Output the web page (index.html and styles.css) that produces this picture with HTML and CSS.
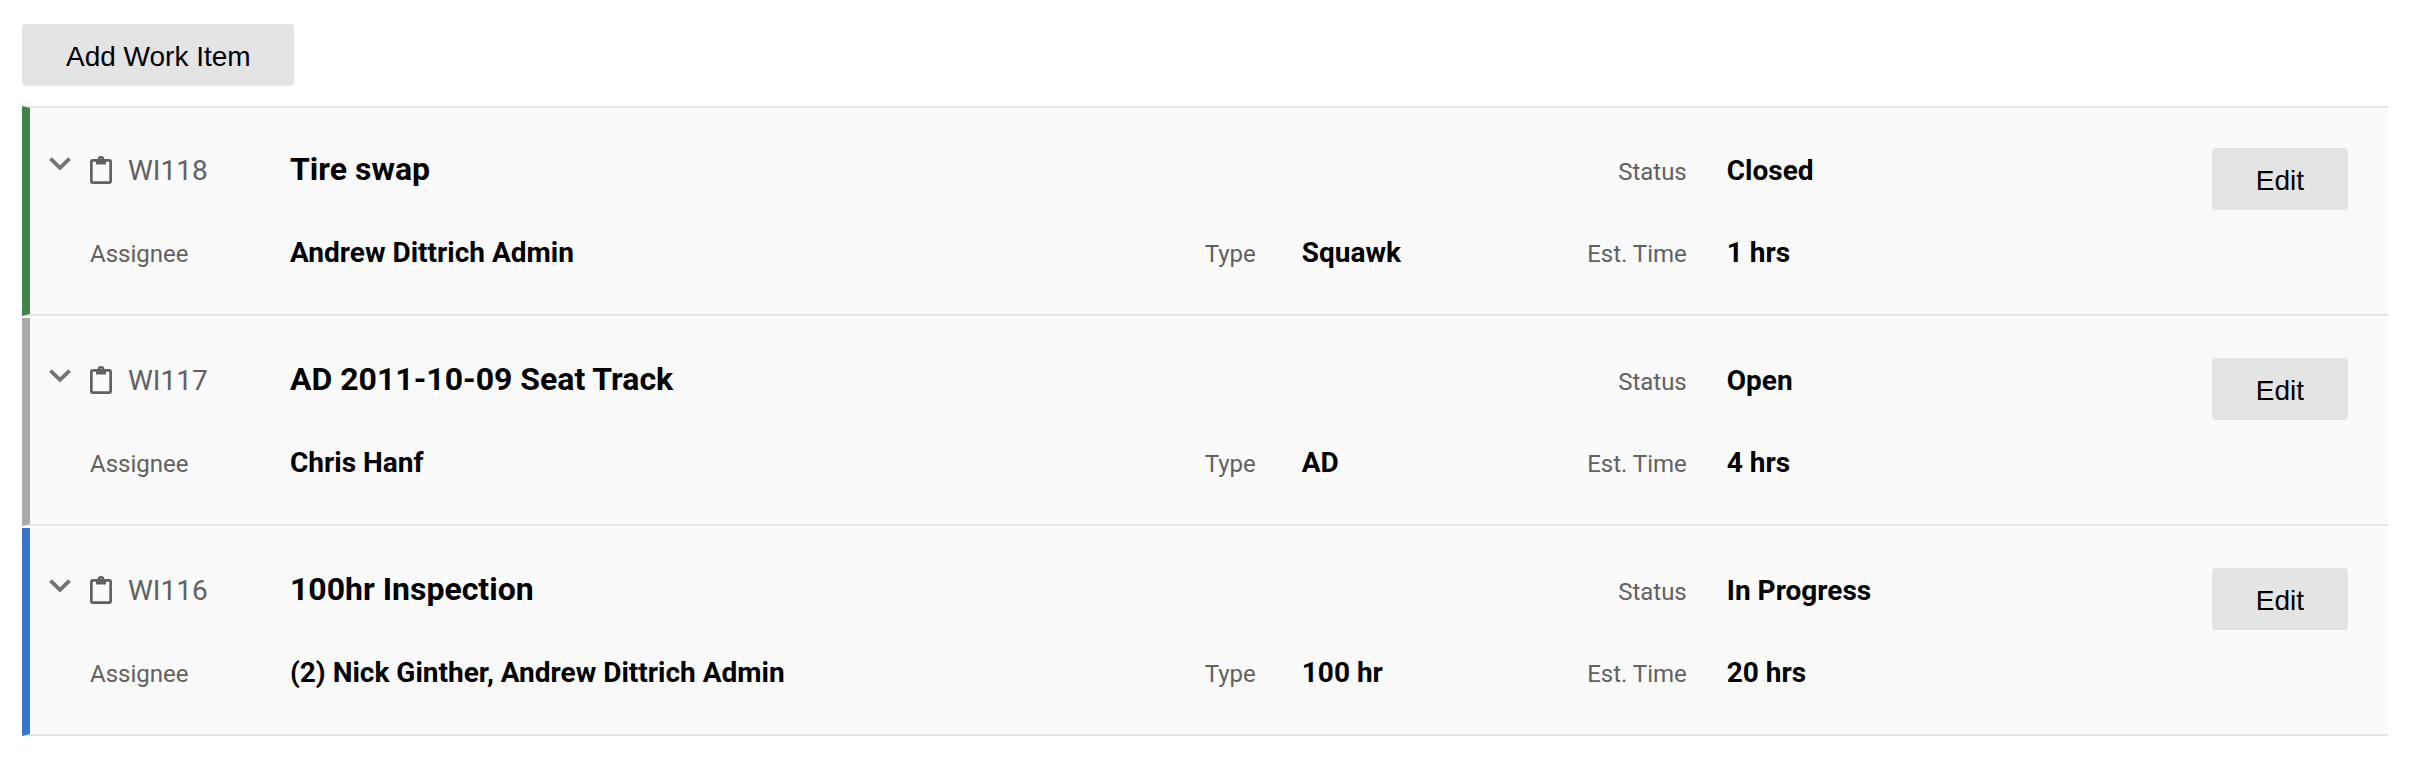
FILE: index.html
```html
<!DOCTYPE html>
<html lang="en">
<head>
  <meta charset="UTF-8">
  <title>Work Items</title>
  <link rel="stylesheet" href="styles.css">
</head>
<body>
  <svg class="sprite" width="0" height="0">
    <symbol id="chevron" viewBox="0 0 22 14">
      <path d="M1.4 1.6 L11 10.9 L20.6 1.6" fill="none" stroke="currentColor" stroke-width="3.9"/>
    </symbol>
    <symbol id="clipboard" viewBox="0 0 22 28">
      <rect x="1.35" y="4.35" width="19.3" height="22.2" rx="1.5" fill="none" stroke="currentColor" stroke-width="2.7"/>
      <path fill="currentColor" fill-rule="evenodd" d="M6 3.3h1.7a3.3 3.3 0 0 1 6.6 0h1.7v5.3h-10zM11 2.4a1.2 1.2 0 1 0 0 2.4a1.2 1.2 0 1 0 0-2.4z"/>
    </symbol>
  </svg>

  <button class="btn add-item">Add Work Item</button>

  <div class="work-items">
    <div class="work-item closed">
      <svg class="chevron"><use href="#chevron"/></svg>
      <div class="details">
        <div class="number"><svg class="clipboard"><use href="#clipboard"/></svg>WI118</div>
        <div class="title">Tire swap</div>
        <div class="label right status">Status</div>
        <div class="value">Closed</div>
        <div class="label">Assignee</div>
        <div class="value">Andrew Dittrich Admin</div>
        <div class="label right">Type</div>
        <div class="value">Squawk</div>
        <div class="label right">Est. Time</div>
        <div class="value">1 hrs</div>
      </div>
      <button class="btn">Edit</button>
    </div>

    <div class="work-item open">
      <svg class="chevron"><use href="#chevron"/></svg>
      <div class="details">
        <div class="number"><svg class="clipboard"><use href="#clipboard"/></svg>WI117</div>
        <div class="title">AD 2011-10-09 Seat Track</div>
        <div class="label right status">Status</div>
        <div class="value">Open</div>
        <div class="label">Assignee</div>
        <div class="value">Chris Hanf</div>
        <div class="label right">Type</div>
        <div class="value">AD</div>
        <div class="label right">Est. Time</div>
        <div class="value">4 hrs</div>
      </div>
      <button class="btn">Edit</button>
    </div>

    <div class="work-item in-progress">
      <svg class="chevron"><use href="#chevron"/></svg>
      <div class="details">
        <div class="number"><svg class="clipboard"><use href="#clipboard"/></svg>WI116</div>
        <div class="title">100hr Inspection</div>
        <div class="label right status">Status</div>
        <div class="value">In Progress</div>
        <div class="label">Assignee</div>
        <div class="value">(2) Nick Ginther, Andrew Dittrich Admin</div>
        <div class="label right">Type</div>
        <div class="value">100 hr</div>
        <div class="label right">Est. Time</div>
        <div class="value">20 hrs</div>
      </div>
      <button class="btn">Edit</button>
    </div>
  </div>
</body>
</html>
```
FILE: styles.css
```css
* {
  box-sizing: border-box;
}

body {
  font-family: Roboto, sans-serif;
  background-color: #fff;
  color: #000;
  margin: 0;
  padding: 24px 26px 24px 22px;
}

.sprite {
  display: none;
}

.btn {
  display: block;
  flex: none;
  height: 62px;
  padding: 3px 44px 0;
  border: none;
  border-radius: 4px;
  background-color: #e4e4e4;
  color: #000;
  font-family: "Liberation Sans", Arial, sans-serif;
  font-size: 28px;
  cursor: pointer;
}

.add-item {
  padding-right: 43px;
}

.work-items {
  display: flex;
  flex-direction: column;
  gap: 2px;
  margin-top: 20px;
}

.work-item {
  display: flex;
  align-items: flex-start;
  height: 208px;
  padding-right: 40px;
  border-left: 8px solid #aaa;
  border-bottom: 2px solid #e4e4e4;
  background-color: #fafafa;
}

.work-item:first-child {
  height: 210px;
  border-top: 2px solid #e4e4e4;
}

.work-item.closed {
  border-left-color: #43834c;
}

.work-item.in-progress {
  border-left-color: #3874cb;
}

.chevron {
  flex: none;
  width: 22px;
  height: 14px;
  margin: 51px 19px 0;
  color: #757575;
}

.work-item:first-child .chevron {
  margin-top: 49px;
}

.details {
  flex: 1;
  display: grid;
  grid-template-columns: 200px 1fr 86px 244px 187px 525px;
  row-gap: 33px;
  align-items: baseline;
  padding-top: 37px;
  line-height: 48px;
}

.number {
  color: #616161;
  font-size: 28px;
}

.clipboard {
  width: 22px;
  height: 28px;
  margin-right: 16px;
  vertical-align: -4px;
}

.title {
  font-size: 32px;
  font-weight: 700;
}

.label {
  color: #616161;
  font-size: 24px;
}

.right {
  text-align: right;
}

.status {
  grid-column: 5;
}

.value {
  font-size: 28px;
  font-weight: 700;
}

.right + .value {
  padding-left: 46px;
}

.value:last-child,
.status + .value {
  padding-left: 40px;
}

.work-item .btn {
  margin-top: 40px;
}
```
